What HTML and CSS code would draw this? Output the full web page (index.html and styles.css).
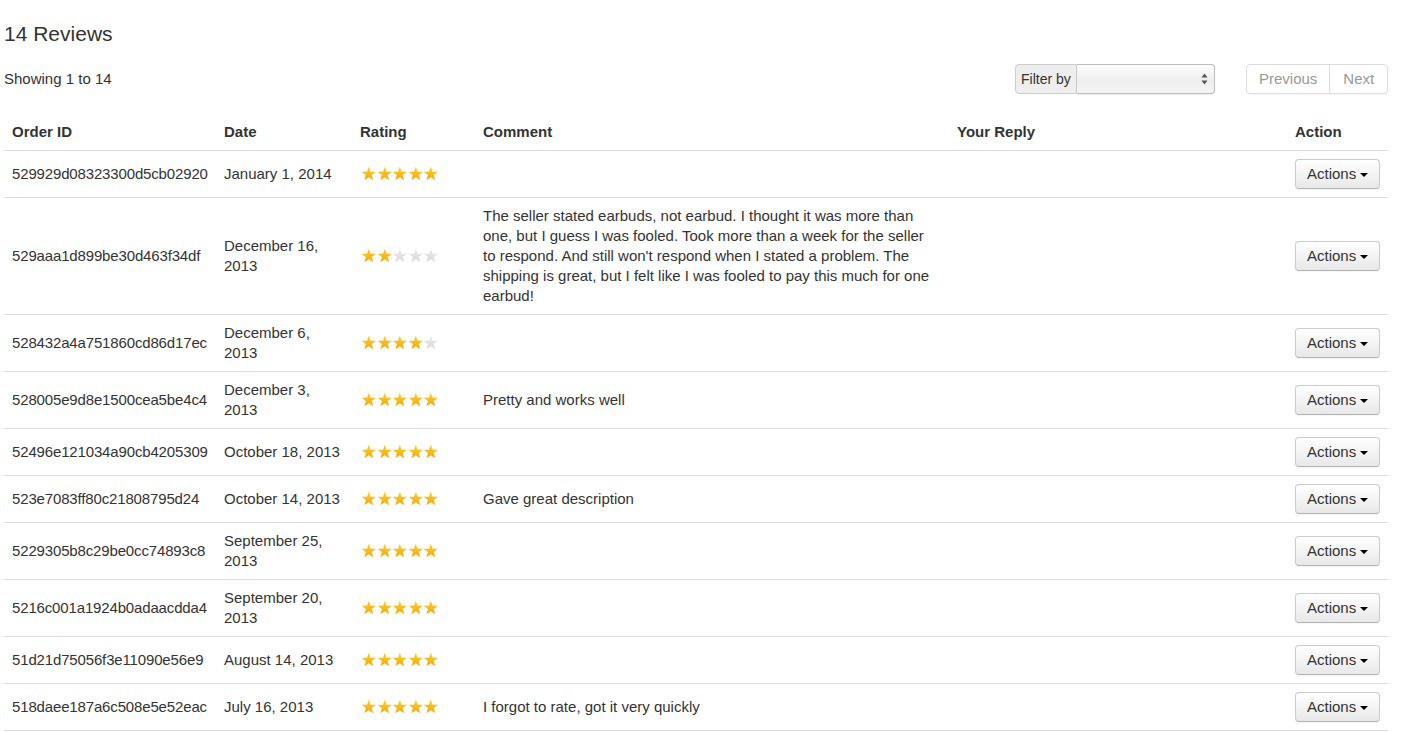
FILE: index.html
```html
<!DOCTYPE html>
<html lang="en">
<head>
    <meta charset="UTF-8">
    <meta name="viewport" content="width=device-width, initial-scale=1.0">
    <title>Reviews</title>
    <link rel="stylesheet" href="styles.css">
</head>
<body>
    <!-- star shape used by the rating cells -->
    <svg class="defs" width="0" height="0">
        <defs>
            <linearGradient id="goldFill" x1="0" y1="0" x2="0" y2="1">
                <stop offset="0" stop-color="#ffcf33"/>
                <stop offset="1" stop-color="#f5a800"/>
            </linearGradient>
            <linearGradient id="greyFill" x1="0" y1="0" x2="0" y2="1">
                <stop offset="0" stop-color="#ebebeb"/>
                <stop offset="1" stop-color="#d9d9d9"/>
            </linearGradient>
            <symbol id="star" viewBox="0 0 16 16">
                <polygon points="8,0.6 9.82,5.89 15.42,5.99 10.95,9.36 12.58,14.71 8,11.5 3.42,14.71 5.05,9.36 0.58,5.99 6.18,5.89"/>
            </symbol>
        </defs>
    </svg>

    <div class="page">
        <h3 class="page-title">14 Reviews</h3>

        <!-- Toolbar -->
        <div class="toolbar">
            <div class="showing">Showing 1 to 14</div>
            <div class="filter-group">
                <span class="add-on">Filter by</span>
                <div class="select-box">
                    <svg class="select-arrows" width="7" height="12" viewBox="0 0 7 12">
                        <polygon points="3.5,0.5 6.5,4.5 0.5,4.5" fill="#555"/>
                        <polygon points="0.5,7.5 6.5,7.5 3.5,11.5" fill="#555"/>
                    </svg>
                </div>
            </div>
            <div class="pager">
                <span class="pager-item">Previous</span>
                <span class="pager-item">Next</span>
            </div>
        </div>

        <!-- Reviews table -->
        <table class="reviews">
            <colgroup>
                <col class="col-id">
                <col class="col-date">
                <col class="col-rating">
                <col class="col-comment">
                <col class="col-reply">
                <col class="col-action">
            </colgroup>
            <thead>
                <tr>
                    <th>Order ID</th>
                    <th>Date</th>
                    <th>Rating</th>
                    <th>Comment</th>
                    <th>Your Reply</th>
                    <th>Action</th>
                </tr>
            </thead>
            <tbody>
                <tr>
                    <td class="order-id">529929d08323300d5cb02920</td>
                    <td>January 1, 2014</td>
                    <td><div class="stars" data-rating="5"></div></td>
                    <td class="comment"></td>
                    <td></td>
                    <td><button class="btn">Actions <span class="caret"></span></button></td>
                </tr>
                <tr>
                    <td class="order-id">529aaa1d899be30d463f34df</td>
                    <td>December 16, 2013</td>
                    <td><div class="stars" data-rating="2"></div></td>
                    <td class="comment">The seller stated earbuds, not earbud. I thought it was more than one, but I guess I was fooled. Took more than a week for the seller to respond. And still won't respond when I stated a problem. The shipping is great, but I felt like I was fooled to pay this much for one earbud!</td>
                    <td></td>
                    <td><button class="btn">Actions <span class="caret"></span></button></td>
                </tr>
                <tr>
                    <td class="order-id">528432a4a751860cd86d17ec</td>
                    <td>December 6, 2013</td>
                    <td><div class="stars" data-rating="4"></div></td>
                    <td class="comment"></td>
                    <td></td>
                    <td><button class="btn">Actions <span class="caret"></span></button></td>
                </tr>
                <tr>
                    <td class="order-id">528005e9d8e1500cea5be4c4</td>
                    <td>December 3, 2013</td>
                    <td><div class="stars" data-rating="5"></div></td>
                    <td class="comment">Pretty and works well</td>
                    <td></td>
                    <td><button class="btn">Actions <span class="caret"></span></button></td>
                </tr>
                <tr>
                    <td class="order-id">52496e121034a90cb4205309</td>
                    <td>October 18, 2013</td>
                    <td><div class="stars" data-rating="5"></div></td>
                    <td class="comment"></td>
                    <td></td>
                    <td><button class="btn">Actions <span class="caret"></span></button></td>
                </tr>
                <tr>
                    <td class="order-id">523e7083ff80c21808795d24</td>
                    <td>October 14, 2013</td>
                    <td><div class="stars" data-rating="5"></div></td>
                    <td class="comment">Gave great description</td>
                    <td></td>
                    <td><button class="btn">Actions <span class="caret"></span></button></td>
                </tr>
                <tr>
                    <td class="order-id">5229305b8c29be0cc74893c8</td>
                    <td>September 25, 2013</td>
                    <td><div class="stars" data-rating="5"></div></td>
                    <td class="comment"></td>
                    <td></td>
                    <td><button class="btn">Actions <span class="caret"></span></button></td>
                </tr>
                <tr>
                    <td class="order-id">5216c001a1924b0adaacdda4</td>
                    <td>September 20, 2013</td>
                    <td><div class="stars" data-rating="5"></div></td>
                    <td class="comment"></td>
                    <td></td>
                    <td><button class="btn">Actions <span class="caret"></span></button></td>
                </tr>
                <tr>
                    <td class="order-id">51d21d75056f3e11090e56e9</td>
                    <td>August 14, 2013</td>
                    <td><div class="stars" data-rating="5"></div></td>
                    <td class="comment"></td>
                    <td></td>
                    <td><button class="btn">Actions <span class="caret"></span></button></td>
                </tr>
                <tr>
                    <td class="order-id">518daee187a6c508e5e52eac</td>
                    <td>July 16, 2013</td>
                    <td><div class="stars" data-rating="5"></div></td>
                    <td class="comment">I forgot to rate, got it very quickly</td>
                    <td></td>
                    <td><button class="btn">Actions <span class="caret"></span></button></td>
                </tr>
            </tbody>
        </table>
    </div>

    <script>
        // Fill each rating cell with five stars
        const svgNS = "http://www.w3.org/2000/svg";
        document.querySelectorAll(".stars").forEach(function (box) {
            const rating = parseInt(box.dataset.rating, 10);
            for (let i = 0; i < 5; i++) {
                const svg = document.createElementNS(svgNS, "svg");
                svg.setAttribute("class", i < rating ? "star on" : "star off");
                svg.setAttribute("viewBox", "0 0 16 16");
                const use = document.createElementNS(svgNS, "use");
                use.setAttribute("href", "#star");
                svg.appendChild(use);
                box.appendChild(svg);
            }
        });
    </script>
</body>
</html>
```

FILE: styles.css
```css
/* Global styles */
body {
    font-family: "Liberation Sans", Arial, sans-serif;
    font-size: 15px;
    line-height: 20px;
    color: #333;
    background-color: #fff;
    margin: 0;
}

.defs {
    position: absolute;
    width: 0;
    height: 0;
}

.page {
    padding: 4px 20px 0 4px;
}

.page-title {
    margin: 10px 0 0;
    font-size: 21px;
    font-weight: normal;
    line-height: 40px;
    color: #333;
}

/* Toolbar */
.toolbar {
    display: flex;
    align-items: center;
    height: 30px;
    margin: 10px 0 20px;
}

.showing {
    line-height: 20px;
}

.filter-group {
    display: flex;
    margin-left: auto;
    margin-right: 31px;
    height: 30px;
}

.add-on {
    box-sizing: border-box;
    width: 62px;
    height: 30px;
    padding: 4px 5px;
    font-size: 14px;
    line-height: 20px;
    background-color: #eee;
    border: 1px solid #ccc;
    border-radius: 4px 0 0 4px;
    color: #333;
    white-space: nowrap;
}

.select-box {
    box-sizing: border-box;
    width: 138px;
    height: 30px;
    display: flex;
    align-items: center;
    justify-content: flex-end;
    padding-right: 6px;
    border: 1px solid #bdbdbd;
    border-left: none;
    border-radius: 0 4px 4px 0;
    background: linear-gradient(#fdfdfd, #eeeeee 55%, #f4f4f4);
    box-shadow: 0 1px 1px rgba(0, 0, 0, 0.08);
}

.pager {
    display: flex;
    width: 142px;
    height: 30px;
    border: 1px solid #ddd;
    border-radius: 4px;
    box-shadow: 0 1px 2px rgba(0, 0, 0, 0.05);
    box-sizing: border-box;
}

.pager-item {
    padding: 4px 12px;
    line-height: 20px;
    color: #999;
}

.pager-item + .pager-item {
    border-left: 1px solid #ddd;
    padding: 4px 13px;
}

/* Reviews table */
.reviews {
    width: 1384px;
    table-layout: fixed;
    border-collapse: collapse;
    border-spacing: 0;
}

.col-id { width: 212px; }
.col-date { width: 136px; }
.col-rating { width: 123px; }
.col-comment { width: 474px; }
.col-reply { width: 338px; }
.col-action { width: 101px; }

.reviews th,
.reviews td {
    padding: 8px;
    text-align: left;
    vertical-align: middle;
    line-height: 20px;
}

.reviews th {
    font-weight: bold;
    vertical-align: bottom;
    border-bottom: 1px solid #ddd;
}

.reviews td {
    border-top: 1px solid #ddd;
}

.reviews tbody tr:first-child td {
    border-top: none;
}

.reviews tbody tr:last-child td {
    border-bottom: 1px solid #ddd;
}

.reviews td.order-id {
    white-space: nowrap;
    letter-spacing: -0.15px;
}

.reviews td.comment {
    padding-right: 16px;
}

/* Stars */
.stars {
    display: flex;
    padding-left: 1px;
}

.star {
    width: 15.6px;
    height: 15.6px;
    flex: none;
}

.star.on {
    fill: url(#goldFill);
}

.star.off {
    fill: url(#greyFill);
}

/* Action button */
.btn {
    font-family: inherit;
    font-size: 15px;
    line-height: 20px;
    color: #333;
    padding: 4px 11px;
    height: 30px;
    border: 1px solid #ccc;
    border-bottom-color: #b3b3b3;
    border-radius: 4px;
    background: linear-gradient(#ffffff, #e8e8e8);
    box-shadow: inset 0 1px 0 rgba(255, 255, 255, 0.2), 0 1px 2px rgba(0, 0, 0, 0.05);
    cursor: pointer;
    white-space: nowrap;
}

.caret {
    display: inline-block;
    width: 0;
    height: 0;
    margin-left: 0;
    vertical-align: middle;
    border-top: 4px solid #000;
    border-left: 4px solid transparent;
    border-right: 4px solid transparent;
}
```
